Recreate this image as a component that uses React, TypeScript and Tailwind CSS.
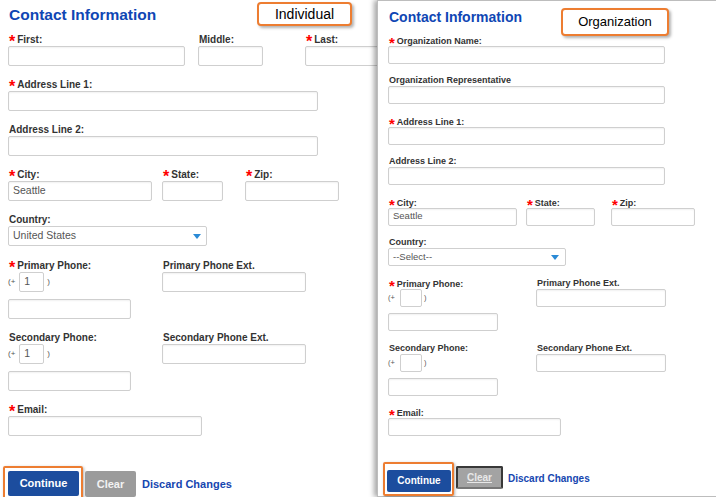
import type { ReactNode } from 'react';

type Size = 'lg' | 'sm';

const S = {
  lg: {
    label: 'h-[13px] leading-[13px] text-[10px]',
    star: 'text-[16px] mr-[2px] align-[-4px]',
    box: 'h-[20px] text-[10.5px]',
    paren: 'text-[8px]',
    cc: 'w-[25px] h-[20px] ml-[4px] mr-[3px] text-[10.5px]',
  },
  sm: {
    label: 'h-[11px] leading-[11px] text-[9px]',
    star: 'text-[15px] mr-[2px] align-[-4px]',
    box: 'h-[18px] text-[9.5px]',
    paren: 'text-[7.5px]',
    cc: 'w-[22px] h-[18px] ml-[5px] mr-[2px] text-[9.5px]',
  },
};

function Label({ text, required, size }: { text: string; required?: boolean; size: Size }) {
  return (
    <div className={`${S[size].label} ml-[1px] font-bold text-[#333] whitespace-nowrap`}>
      {required && <span className={`${S[size].star} text-[#f00] font-bold leading-none`}>*</span>}
      {text}
    </div>
  );
}

function Box({ w, size, children }: { w: string; size: Size; children?: ReactNode }) {
  return (
    <div
      className={`${w} ${S[size].box} shrink-0 flex items-center pl-[4px] bg-white border border-[#cfcfcf] rounded-[2px] shadow-[inset_0_1px_2px_rgba(0,0,0,0.06)] text-[#555]`}
    >
      {children}
    </div>
  );
}

function Field({
  label, required, w, size, value, className = '',
}: { label: string; required?: boolean; w: string; size: Size; value?: string; className?: string }) {
  return (
    <div className={`flex flex-col shrink-0 ${className}`}>
      <Label text={label} required={required} size={size} />
      <Box w={w} size={size}>{value}</Box>
    </div>
  );
}

function Select({ label, w, size, value, pr }: { label: string; w: string; size: Size; value: string; pr: string }) {
  return (
    <div className="flex flex-col">
      <Label text={label} size={size} />
      <div
        className={`${w} ${S[size].box} ${pr} flex items-center justify-between pl-[4px] bg-white border border-[#cfcfcf] rounded-[2px] text-[#555]`}
      >
        <span>{value}</span>
        <svg width="8" height="5" viewBox="0 0 8 5">
          <polygon points="0,0 8,0 4,5" fill="#2a8ad6" />
        </svg>
      </div>
    </div>
  );
}

function Phone({
  label, required, size, cc, colW, inputW, ext, extW, gap,
}: {
  label: string; required?: boolean; size: Size; cc?: string; colW: string; inputW: string;
  ext: string; extW: string; gap: string;
}) {
  return (
    <div className="flex">
      <div className={`${colW} shrink-0 flex flex-col`}>
        <Label text={label} required={required} size={size} />
        <div className="flex items-center">
          <span className={`${S[size].paren} text-[#555]`}>(+</span>
          <div className={`${S[size].cc} flex items-center pl-[4px] bg-white border border-[#cfcfcf] rounded-[2px] text-[#555]`}>
            {cc}
          </div>
          <span className={`${S[size].paren} text-[#555]`}>)</span>
        </div>
        <div className={gap}>
          <Box w={inputW} size={size} />
        </div>
      </div>
      <Field label={ext} w={extW} size={size} />
    </div>
  );
}

export default function App() {
  return (
    <div className="relative w-[716px] h-[497px] flex overflow-hidden bg-white font-['Liberation_Sans',Arial,sans-serif]">
      {/* Individual */}
      <div className="w-[377px] h-[497px] shrink-0 overflow-hidden bg-white pl-[8px] pt-[6px]">
        <h1 className="ml-[1px] text-[15.5px] leading-[18px] font-bold text-[#0f46b4]">Contact Information</h1>
        <div className="flex mt-[9px]">
          <Field label="First:" required w="w-[177px]" size="lg" />
          <Field label="Middle:" w="w-[65px]" size="lg" className="ml-[13px]" />
          <Field label="Last:" required w="w-[90px]" size="lg" className="ml-[42px]" />
        </div>
        <div className="mt-[12px]">
          <Field label="Address Line 1:" required w="w-[310px]" size="lg" />
        </div>
        <div className="mt-[12px]">
          <Field label="Address Line 2:" w="w-[310px]" size="lg" />
        </div>
        <div className="flex mt-[12px]">
          <Field label="City:" required w="w-[144px]" size="lg" value="Seattle" />
          <Field label="State:" required w="w-[61px]" size="lg" className="ml-[10px]" />
          <Field label="Zip:" required w="w-[94px]" size="lg" className="ml-[22px]" />
        </div>
        <div className="mt-[12px]">
          <Select label="Country:" w="w-[199px]" size="lg" value="United States" pr="pr-[5px]" />
        </div>
        <div className="mt-[13px]">
          <Phone label="Primary Phone:" required size="lg" cc="1" colW="w-[154px]" inputW="w-[123px]"
            ext="Primary Phone Ext." extW="w-[144px]" gap="mt-[7px]" />
        </div>
        <div className="mt-[12px]">
          <Phone label="Secondary Phone:" size="lg" cc="1" colW="w-[154px]" inputW="w-[123px]"
            ext="Secondary Phone Ext." extW="w-[144px]" gap="mt-[7px]" />
        </div>
        <div className="mt-[12px]">
          <Field label="Email:" required w="w-[194px]" size="lg" />
        </div>
        <div className="flex items-start mt-[30px] -ml-[5px]">
          <div className="border-2 border-[#ed7d31] rounded-[2px] pl-[3px] pr-[2px] pt-[2px] pb-[2px] shadow-[1px_1px_3px_rgba(0,0,0,0.3)]">
            <button className="w-[71px] h-[25px] bg-[#1c4d9e] text-white text-[11px] font-bold rounded-[2px]">Continue</button>
          </div>
          <button className="ml-[2px] mt-[5px] w-[51px] h-[26px] bg-[#9b9b9b] text-[#f2f2f2] text-[11px] font-bold rounded-[2px]">Clear</button>
          <a className="ml-[6px] mt-[11.5px] text-[11px] leading-[13px] font-bold text-[#1646b0]">Discard Changes</a>
        </div>
      </div>

      {/* Organization */}
      <div className="relative z-10 flex-1 h-[497px] bg-white border-l border-t border-b border-[#bdbdbd] shadow-[-3px_0_5px_rgba(0,0,0,0.35)] pl-[10px] pt-[8px]">
        <h1 className="ml-[1px] text-[14px] leading-[16px] font-bold text-[#0f46b4]">Contact Information</h1>
        <div className="mt-[10px]">
          <Field label="Organization Name:" required w="w-[277px]" size="sm" />
        </div>
        <div className="mt-[11px]">
          <Field label="Organization Representative" w="w-[277px]" size="sm" />
        </div>
        <div className="mt-[11.5px]">
          <Field label="Address Line 1:" required w="w-[277px]" size="sm" />
        </div>
        <div className="mt-[11.5px]">
          <Field label="Address Line 2:" w="w-[277px]" size="sm" />
        </div>
        <div className="flex mt-[11.5px]">
          <Field label="City:" required w="w-[129px]" size="sm" value="Seattle" />
          <Field label="State:" required w="w-[69px]" size="sm" className="ml-[9px]" />
          <Field label="Zip:" required w="w-[84px]" size="sm" className="ml-[16px]" />
        </div>
        <div className="mt-[11.5px]">
          <Select label="Country:" w="w-[178px]" size="sm" value="--Select--" pr="pr-[6px]" />
        </div>
        <div className="mt-[11.5px]">
          <Phone label="Primary Phone:" required size="sm" colW="w-[148px]" inputW="w-[110px]"
            ext="Primary Phone Ext." extW="w-[130px]" gap="mt-[6px]" />
        </div>
        <div className="mt-[12px]">
          <Phone label="Secondary Phone:" size="sm" colW="w-[148px]" inputW="w-[110px]"
            ext="Secondary Phone Ext." extW="w-[130px]" gap="mt-[6px]" />
        </div>
        <div className="mt-[11.5px]">
          <Field label="Email:" required w="w-[173px]" size="sm" />
        </div>
        <div className="flex items-start mt-[26px] -ml-[5px]">
          <div className="border-2 border-[#ed7d31] rounded-[2px] pl-[2px] pr-[1px] pt-[3px] pb-[2px] shadow-[1px_1px_3px_rgba(0,0,0,0.3)]">
            <button className="w-[64px] h-[22px] bg-[#1c4d9e] text-white text-[10px] font-bold rounded-[2px]">Continue</button>
          </div>
          <button className="ml-[2px] mt-[4px] w-[47px] h-[23px] bg-[#a3a3a3] border-2 border-[#383838] border-b-[#777] text-[#e8e8e8] text-[10px] font-bold underline rounded-[2px]">Clear</button>
          <a className="ml-[5px] mt-[11px] text-[10px] leading-[12px] font-bold text-[#1646b0]">Discard Changes</a>
        </div>
      </div>

      {/* callouts */}
      <div className="absolute left-[257px] top-[2px] z-20 w-[95px] h-[24px] flex items-center justify-center bg-white border-2 border-[#ed7d31] rounded-[4px] shadow-[2px_2px_3px_rgba(0,0,0,0.3)] text-[14px] text-black">
        Individual
      </div>
      <div className="absolute left-[561px] top-[8px] z-20 w-[108px] h-[28px] flex items-center justify-center bg-white border-2 border-[#ed7d31] rounded-[4px] shadow-[2px_2px_3px_rgba(0,0,0,0.3)] text-[13px] text-black">
        Organization
      </div>
    </div>
  );
}
